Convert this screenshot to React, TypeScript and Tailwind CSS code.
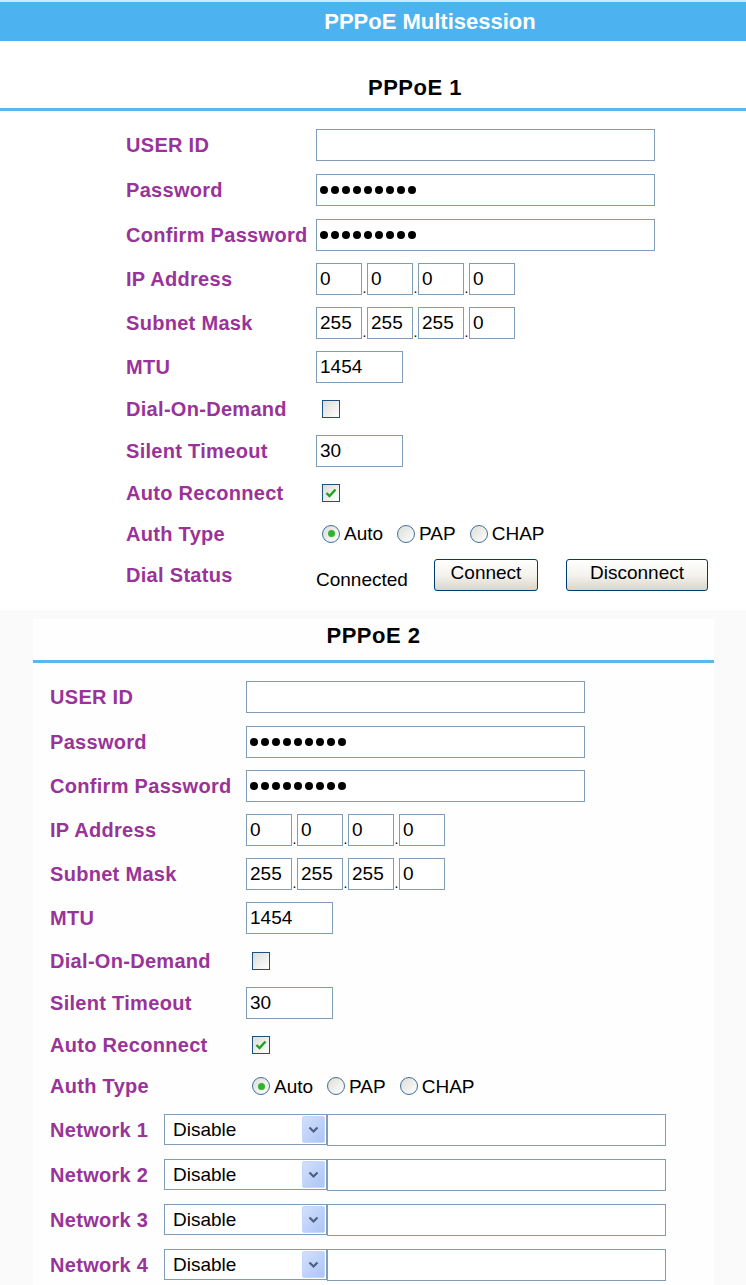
import React from "react";

const LABEL =
  "font-bold text-[20px] leading-none tracking-[0.3px] text-[#993399] whitespace-nowrap";
const FIELD =
  "h-[32px] border border-[#7f9db9] bg-white px-[3px] text-[19px] leading-none text-black outline-none";

function TextBox({ width, value = "" }: { width: string; value?: string }) {
  return <input readOnly defaultValue={value} className={`${FIELD} ${width}`} />;
}

function PasswordBox() {
  return (
    <div className="flex h-[32px] w-[339px] items-center gap-[3px] border border-[#7f9db9] bg-white pl-[3px]">
      {Array.from({ length: 9 }).map((_, i) => (
        <span key={i} className="h-[8px] w-[8px] rounded-full bg-black" />
      ))}
    </div>
  );
}

function IpBox({ parts }: { parts: string[] }) {
  return (
    <div className="flex items-end">
      {parts.map((p, i) => (
        <React.Fragment key={i}>
          {i > 0 && (
            <span className="w-[5px] text-center text-[14px] leading-[14px] text-black">.</span>
          )}
          <input readOnly defaultValue={p} className={`${FIELD} w-[46px]`} />
        </React.Fragment>
      ))}
    </div>
  );
}

function CheckBox({ checked }: { checked?: boolean }) {
  return (
    <span className="ml-[6px] flex h-[18px] w-[18px] items-center justify-center border border-[#1c5180] bg-linear-to-br from-[#dcdcd7] to-white">
      {checked && (
        <svg width="14" height="14" viewBox="0 0 14 14">
          <path d="M2.5 7 L5.5 10 L11.5 3.5" fill="none" stroke="#21a121" strokeWidth="2.4" />
        </svg>
      )}
    </span>
  );
}

function Radio({ checked, label }: { checked?: boolean; label: string }) {
  return (
    <span className="flex items-center gap-[4px]">
      <span className="flex h-[18px] w-[18px] items-center justify-center rounded-full border border-[#3f6f9a] bg-linear-to-br from-[#dcdcd7] to-white">
        {checked && <span className="h-[7px] w-[7px] rounded-full bg-[#2fb32f]" />}
      </span>
      <span className="text-[19px] leading-none text-black">{label}</span>
    </span>
  );
}

function AuthType() {
  return (
    <div className="ml-[6px] flex items-center gap-[14px]">
      <Radio checked label="Auto" />
      <Radio label="PAP" />
      <Radio label="CHAP" />
    </div>
  );
}

function XpButton({ children, width }: { children: React.ReactNode; width: string }) {
  return (
    <button
      className={`h-[32px] ${width} rounded-[3px] border border-[#003c74] bg-linear-to-b from-white via-[#f4f3ee] to-[#d9d5c9] pb-[4px] text-[19px] leading-none text-black`}
    >
      {children}
    </button>
  );
}

function NetSelect() {
  return (
    <div className="flex h-[31px] w-[163px] items-center border border-[#7f9db9] bg-white">
      <span className="flex-1 pl-[8px] text-[19px] leading-none text-black">Disable</span>
      <span className="mr-[1px] flex h-[27px] w-[23px] items-center justify-center rounded-[2px] border border-[#c6d6fc] bg-linear-to-br from-[#d2e0fd] to-[#adc4f5]">
        <svg width="11" height="8" viewBox="0 0 11 8">
          <path d="M1.5 1.5 L5.5 5.5 L9.5 1.5" fill="none" stroke="#4d6185" strokeWidth="2.2" />
        </svg>
      </span>
    </div>
  );
}

function Row({
  h,
  labelW,
  label,
  children,
}: {
  h: string;
  labelW: string;
  label: string;
  children: React.ReactNode;
}) {
  return (
    <div className={`flex items-center ${h}`}>
      <div className={`${labelW} ${LABEL}`}>{label}</div>
      {children}
    </div>
  );
}

export default function App() {
  return (
    <div className="min-h-[1285px] w-[746px] bg-[#fafafa] font-['Liberation_Sans',Arial,sans-serif]">
      <div className="bg-white">
        {/* title bar */}
        <div className="h-[2px] bg-[#cfe8fa]" />
        <div className="flex h-[39px] items-center justify-center bg-[#4db3f0] pl-[114px] text-[22px] font-bold leading-none text-white">
          PPPoE Multisession
        </div>

        {/* PPPoE 1 */}
        <div className="flex h-[67px] items-end justify-center pb-[8px] pl-[84px] text-[22px] font-bold leading-[24px] tracking-[0.5px] text-black">
          PPPoE 1
        </div>
        <div className="h-[3px] bg-[#5ab7ee]" />

        <div className="pb-[15px] pl-[126px] pt-[11px]">
          <Row h="h-[45px]" labelW="w-[190px]" label="USER ID">
            <TextBox width="w-[339px]" />
          </Row>
          <Row h="h-[45px]" labelW="w-[190px]" label="Password">
            <PasswordBox />
          </Row>
          <Row h="h-[45px]" labelW="w-[190px]" label="Confirm Password">
            <PasswordBox />
          </Row>
          <Row h="h-[44px]" labelW="w-[190px]" label="IP Address">
            <IpBox parts={["0", "0", "0", "0"]} />
          </Row>
          <Row h="h-[44px]" labelW="w-[190px]" label="Subnet Mask">
            <IpBox parts={["255", "255", "255", "0"]} />
          </Row>
          <Row h="h-[43px]" labelW="w-[190px]" label="MTU">
            <TextBox width="w-[87px]" value="1454" />
          </Row>
          <Row h="h-[42px]" labelW="w-[190px]" label="Dial-On-Demand">
            <CheckBox />
          </Row>
          <Row h="h-[42px]" labelW="w-[190px]" label="Silent Timeout">
            <TextBox width="w-[87px]" value="30" />
          </Row>
          <Row h="h-[41px]" labelW="w-[190px]" label="Auto Reconnect">
            <CheckBox checked />
          </Row>
          <Row h="h-[41px]" labelW="w-[190px]" label="Auth Type">
            <AuthType />
          </Row>
          <Row h="h-[41px]" labelW="w-[190px]" label="Dial Status">
            <div className="flex items-center">
              <span className="mt-[10px] w-[118px] text-[19px] leading-none text-black">Connected</span>
              <XpButton width="w-[104px]">Connect</XpButton>
              <span className="w-[28px]" />
              <XpButton width="w-[142px]">Disconnect</XpButton>
            </div>
          </Row>
        </div>
      </div>

      {/* PPPoE 2 */}
      <div className="pt-[9px]">
        <div className="ml-[33px] w-[681px] bg-[#fefefe]">
          <div className="flex h-[41px] items-center justify-center pb-[7px] text-[22px] font-bold leading-[24px] tracking-[0.5px] text-black">
            PPPoE 2
          </div>
          <div className="h-[3px] bg-[#5ab7ee]" />

          <div className="pb-[10px] pl-[17px] pt-[11px]">
            <Row h="h-[45px]" labelW="w-[196px]" label="USER ID">
              <TextBox width="w-[339px]" />
            </Row>
            <Row h="h-[45px]" labelW="w-[196px]" label="Password">
              <PasswordBox />
            </Row>
            <Row h="h-[44px]" labelW="w-[196px]" label="Confirm Password">
              <PasswordBox />
            </Row>
            <Row h="h-[44px]" labelW="w-[196px]" label="IP Address">
              <IpBox parts={["0", "0", "0", "0"]} />
            </Row>
            <Row h="h-[44px]" labelW="w-[196px]" label="Subnet Mask">
              <IpBox parts={["255", "255", "255", "0"]} />
            </Row>
            <Row h="h-[44px]" labelW="w-[196px]" label="MTU">
              <TextBox width="w-[87px]" value="1454" />
            </Row>
            <Row h="h-[42px]" labelW="w-[196px]" label="Dial-On-Demand">
              <CheckBox />
            </Row>
            <Row h="h-[42px]" labelW="w-[196px]" label="Silent Timeout">
              <TextBox width="w-[87px]" value="30" />
            </Row>
            <Row h="h-[41px]" labelW="w-[196px]" label="Auto Reconnect">
              <CheckBox checked />
            </Row>
            <Row h="h-[42px]" labelW="w-[196px]" label="Auth Type">
              <AuthType />
            </Row>
            {["Network 1", "Network 2", "Network 3", "Network 4"].map((n) => (
              <Row key={n} h="h-[45px]" labelW="w-[114px]" label={n}>
                <NetSelect />
                <TextBox width="w-[339px] h-[31px]" />
              </Row>
            ))}
          </div>
        </div>
      </div>
    </div>
  );
}
